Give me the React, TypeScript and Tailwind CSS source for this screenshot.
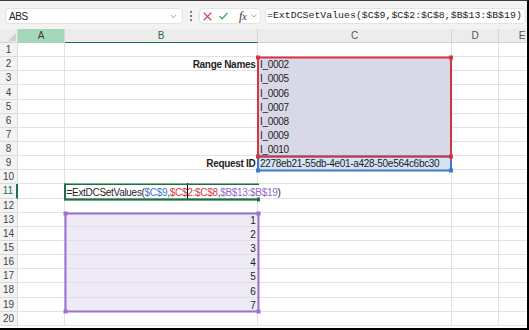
import { ChevronDown } from 'lucide-react';

const COLS = [
    { name: 'A', width: 'w-[47px]' },
    { name: 'B', width: 'w-[193px]' },
    { name: 'C', width: 'w-[194px]' },
    { name: 'D', width: 'w-[47px]' },
    { name: 'E', width: 'w-[47px]' },
];

const RANGE_NAMES = ['I_0002', 'I_0005', 'I_0006', 'I_0007', 'I_0008', 'I_0009', 'I_0010'];
const REQUEST_ID = '2278eb21-55db-4e01-a428-50e564c6bc30';
const FORMULA = '=ExtDCSetValues($C$9,$C$2:$C$8,$B$13:$B$19)';

const ROWS = Array.from({ length: 20 }, (_, i) => i + 1);

type CellInfo = {
    text?: string;
    bold?: boolean;
    right?: boolean;
    fill?: string;
    formula?: boolean;
};

function cellInfo(row: number, col: string): CellInfo {
    if (col === 'B') {
        if (row === 2) return { text: 'Range Names', bold: true, right: true };
        if (row === 9) return { text: 'Request ID', bold: true, right: true };
        if (row === 11) return { formula: true };
        if (row >= 13 && row <= 19)
            return {
                text: String(row - 12),
                right: true,
                fill: 'bg-[#eeeaf6] border-b-[#e1dbec]',
            };
    }
    if (col === 'C') {
        if (row >= 2 && row <= 8)
            return {
                text: RANGE_NAMES[row - 2],
                fill: 'bg-[#d9d8e8] border-b-[#d9d8e8]',
            };
        if (row === 9) return { text: REQUEST_ID, fill: 'bg-[#d3e2f4]' };
    }
    return {};
}

// 4px grab handles on the corners of a reference box
function handles(x1: number, y1: number, x2: number, y2: number, color: string) {
    return [
        [x1 - 1, y1 - 1],
        [x2 - 3, y1 - 1],
        [x1 - 1, y2 - 3],
        [x2 - 3, y2 - 3],
    ].map(([x, y]) => <rect key={`${x}-${y}`} x={x} y={y} width={4} height={4} fill={color} />);
}

function FormulaText() {
    return (
        <span>
            =ExtDCSetValues(
            <span className="text-[#3b78d8]">$C$9</span>,
            <span className="text-[#d5393f]">
                $C$
                <span className="relative">
                    <span className="absolute -top-[4px] left-0 h-[16px] w-px bg-black" />
                </span>
                2:$C$8
            </span>
            ,<span className="text-[#9466cc]">$B$13:$B$19</span>)
        </span>
    );
}

export default function App() {
    return (
        <div className="relative h-[330px] w-[529px] overflow-hidden border-t border-r-2 border-b-2 border-t-[#3c3c3c] border-r-black border-b-black bg-white font-['Liberation_Sans',Arial,sans-serif]">
            {/* Name box + formula bar */}
            <div className="flex h-[28px] items-start bg-[#f3f3f3] pt-[7px] pl-[5px]">
                <div className="flex h-[16px] w-[178px] flex-none items-center justify-between rounded-[4px] border border-[#e3e3e3] bg-white pr-[4px] pl-[3px]">
                    <span className="text-[10px] tracking-[-0.4px] text-[#222]">ABS</span>
                    <ChevronDown size={9} strokeWidth={1.6} className="text-[#555]" />
                </div>
                <div className="flex h-[16px] w-[16px] flex-none flex-col items-center justify-center gap-[2px]">
                    <span className="h-[2px] w-[2px] rounded-full bg-[#555]" />
                    <span className="h-[2px] w-[2px] rounded-full bg-[#555]" />
                    <span className="h-[2px] w-[2px] rounded-full bg-[#555]" />
                </div>
                <div className="flex h-[16px] w-[62px] flex-none items-center rounded-[4px] border border-[#e3e3e3] bg-white pl-[3px]">
                    <svg width="9" height="9" viewBox="0 0 9 9">
                        <path d="M0.7 0.7 L8.3 8.3 M8.3 0.7 L0.7 8.3" stroke="#d13438" strokeWidth="1.2" />
                    </svg>
                    <svg width="9" height="8" viewBox="0 0 9 8" className="ml-[7px]">
                        <path d="M0.6 4.2 L3.2 6.9 L8.4 0.8" stroke="#38a34a" strokeWidth="1.2" fill="none" />
                    </svg>
                    <span className="ml-[11px] font-['Liberation_Serif',serif] text-[12px] leading-none text-[#333] italic">
                        f<span className="text-[10px]">x</span>
                    </span>
                    <svg width="6" height="4" viewBox="0 0 6 4" className="ml-[4px]">
                        <path d="M0.5 0.5 L3 3 L5.5 0.5" stroke="#aaa" strokeWidth="1" fill="none" />
                    </svg>
                </div>
                <div className="mr-[1px] ml-[4px] flex h-[16px] flex-1 items-center rounded-[4px] border border-[#e3e3e3] bg-white pl-[1px]">
                    <span className="font-['Liberation_Mono',monospace] text-[9.9px] whitespace-nowrap text-[#222]">
                        {FORMULA}
                    </span>
                </div>
            </div>

            {/* Sheet */}
            <div className="relative">
                <div className="flex h-[14px] bg-[#ececec]">
                    <div className="relative w-[18px] flex-none border-r border-b border-[#d4d4d4]">
                        <svg width="8" height="8" viewBox="0 0 8 8" className="absolute right-[1px] bottom-[1px]">
                            <path d="M8 0 L8 8 L0 8 Z" fill="#cfcfcf" />
                        </svg>
                    </div>
                    {COLS.map((c) => (
                        <div
                            key={c.name}
                            className={`flex flex-none items-center justify-center border-r border-b border-[#d4d4d4] text-[10px] ${c.width} ${
                                c.name === 'A'
                                    ? 'border-b-[#a5d7ba] bg-[#a5d7ba] text-[#3b3b3b]'
                                    : c.name === 'B'
                                      ? 'border-b-[1.5px] border-b-[#1e7145] text-[#1e7145]'
                                      : 'text-[#555]'
                            }`}
                        >
                            {c.name}
                        </div>
                    ))}
                </div>

                {ROWS.map((r) => (
                    <div key={r} className="flex h-[14.15px]">
                        <div
                            className={`flex w-[18px] flex-none items-center justify-center border-r border-b border-[#dcdcdc] bg-[#f3f3f3] text-[10px] ${
                                r === 11
                                    ? 'border-r-2 border-r-[#1e7145] text-[#1e7145]'
                                    : 'text-[#444]'
                            }`}
                        >
                            {r}
                        </div>
                        {COLS.map((c) => {
                            const info = cellInfo(r, c.name);
                            return (
                                <div
                                    key={c.name}
                                    className={`flex flex-none items-end whitespace-nowrap border-r border-b border-[#e2e2e2] px-[2px] text-[10px] leading-none tracking-[-0.3px] text-[#1f1f1f] ${c.width} ${
                                        info.fill ?? ''
                                    } ${info.right ? 'justify-end pr-[1.5px]' : ''} ${
                                        info.bold ? 'font-bold' : ''
                                    } ${
                                        info.formula
                                            ? 'relative z-10 overflow-visible border-r-transparent pl-[1.5px]'
                                            : 'overflow-hidden'
                                    }`}
                                >
                                    {info.formula ? <FormulaText /> : info.text}
                                </div>
                            );
                        })}
                    </div>
                ))}

                {/* Formula reference boxes drawn over the cells */}
                <svg
                    width="527"
                    height="297"
                    className="pointer-events-none absolute top-0 left-0 z-20"
                >
                    <rect x={258} y={127.5} width={193} height={14} fill="none" stroke="#3f78d0" strokeWidth={2} />
                    {handles(257, 126.5, 452, 142.5, '#3f78d0').slice(2)}
                    <rect x={258} y={28.5} width={193} height={99} fill="none" stroke="#d3363d" strokeWidth={2} />
                    {handles(257, 27.5, 452, 128.5, '#d3363d')}
                    <rect x={65.5} y={184.5} width={193} height={98} fill="none" stroke="#9a70d0" strokeWidth={2} />
                    {handles(64.5, 183.5, 259.5, 283.5, '#9a70d0')}
                    <path d="M64 155.25 H259 M65 154.5 V171.5 M64 170.5 H259" stroke="#1e7145" fill="none" strokeWidth={1.5} />
                    <path d="M65 154.5 V171.5 M64 170.5 H259" stroke="#1e7145" fill="none" strokeWidth={2} />
                    <rect x={257} y={168.5} width={3} height={4} fill="#1e7145" />
                </svg>
            </div>
        </div>
    );
}
